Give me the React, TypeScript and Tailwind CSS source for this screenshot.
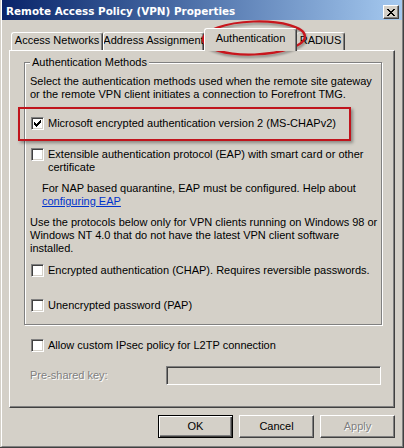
import React from "react";

function CheckMark() {
  return (
    <svg width="7" height="7" viewBox="0 0 7 7" shapeRendering="crispEdges" className="block">
      <path
        d="M0 2h1v3H0zM1 3h1v3H1zM2 4h1v3H2zM3 3h1v3H3zM4 2h1v3H4zM5 1h1v3H5zM6 0h1v3H6z"
        fill="#000"
      />
    </svg>
  );
}

function Box({ checked }: { checked?: boolean }) {
  return (
    <div className="flex h-[13px] w-[13px] shrink-0 items-center justify-center border border-[#808080] border-r-white border-b-white bg-white shadow-[inset_1px_1px_0_#404040,inset_-1px_-1px_0_#d4d0c8]">
      {checked ? <CheckMark /> : null}
    </div>
  );
}

function CloseX() {
  return (
    <svg width="8" height="7" viewBox="0 0 8 7" shapeRendering="crispEdges" className="block">
      <path
        d="M0 0h2v1H0zM6 0h2v1H6zM1 1h2v1H1zM5 1h2v1H5zM2 2h4v1H2zM3 3h2v1H3zM2 4h4v1H2zM1 5h2v1H1zM5 5h2v1H5zM0 6h2v1H0zM6 6h2v1H6z"
        fill="#000"
      />
    </svg>
  );
}

export default function App() {
  return (
    <div className="relative h-[448px] w-[404px] overflow-hidden bg-[#d4d0c8] font-['Liberation_Sans',Arial,sans-serif] text-[11px] leading-[13px] text-black">
      <div className="flex h-full flex-col border-r border-b border-r-[#404040] border-b-[#404040] pl-px">
        <div className="flex h-full flex-col border-l border-r border-b border-l-white border-r-[#808080] border-b-[#808080]">
          {/* Title bar */}
          <div className="flex h-[20px] shrink-0 items-start justify-between bg-linear-to-r from-[#0a246a] to-[#a6caf0]">
            <div className="ml-[4px] mt-[5px] whitespace-nowrap font-['DejaVu_Sans',Verdana,sans-serif] text-[10.4px] font-bold text-white">
              Remote Access Policy (VPN) Properties
            </div>
            <div className="mr-[3px] mt-[5px] flex h-[14px] w-[16px] items-center justify-center border border-white border-r-[#404040] border-b-[#404040] bg-[#d4d0c8] shadow-[inset_-1px_-1px_0_#808080]">
              <CloseX />
            </div>
          </div>

          {/* Body */}
          <div className="flex flex-1 flex-col px-[7px] pt-[8px]">
            {/* Tabs */}
            <div className="flex h-[22px] items-end pl-[2px]">
              <div className="flex h-[18px] w-[92px] justify-center whitespace-nowrap rounded-t-[3px] border-l border-t border-r border-l-white border-t-white border-r-[#404040] pt-[1px] shadow-[inset_-1px_0_0_#808080]">
                Access Networks
              </div>
              <div className="flex h-[18px] w-[101px] justify-center overflow-hidden whitespace-nowrap rounded-t-[3px] border-l border-t border-r border-l-white border-t-white border-r-[#404040] pt-[1px] shadow-[inset_-1px_0_0_#808080]">
                Address Assignment
              </div>
              <div className="relative z-10 -mb-px flex h-[23px] w-[93px] justify-center whitespace-nowrap rounded-t-[3px] border-l border-t border-r border-l-white border-t-white border-r-[#404040] bg-[#d4d0c8] pt-[3px] shadow-[inset_-1px_0_0_#808080]">
                Authentication
              </div>
              <div className="flex h-[18px] w-[48px] justify-center whitespace-nowrap rounded-t-[3px] border-t border-r border-t-white border-r-[#404040] pt-[1px] shadow-[inset_-1px_0_0_#808080]">
                RADIUS
              </div>
            </div>

            {/* Panel */}
            <div className="flex h-[358px] shrink-0 flex-col border border-white border-r-[#404040] border-b-[#404040] pl-[14px] shadow-[inset_-1px_-1px_0_#808080]">
              {/* Group box */}
              <div className="relative mt-[11px] h-[263px] w-[358px] shrink-0 border border-[#808080] shadow-[inset_1px_1px_0_#fff,1px_1px_0_#fff]">
                <div className="absolute left-[5px] top-[-7px] whitespace-nowrap bg-[#d4d0c8] px-[2px]">
                  Authentication Methods
                </div>
                <div className="flex flex-col pl-[5px] pt-[12px]">
                  <p>
                    Select the authentication methods used when the remote site gateway
                    <br />
                    or the remote VPN client initiates a connection to Forefront TMG.
                  </p>
                  <div className="mt-[16px] ml-[1px] flex items-start gap-[4px]">
                    <Box checked />
                    <span className="whitespace-nowrap">
                      Microsoft encrypted authentication version 2 (MS-CHAPv2)
                    </span>
                  </div>
                  <div className="mt-[18px] ml-[1px] flex items-start gap-[4px]">
                    <Box />
                    <span>
                      Extensible authentication protocol (EAP) with smart card or other
                      <br />
                      certificate
                    </span>
                  </div>
                  <p className="mt-[8px] pl-[12px]">
                    For NAP based quarantine, EAP must be configured. Help about
                    <br />
                    <span className="text-[#0033cc] underline">configuring EAP</span>
                  </p>
                  <p className="mt-[8px]">
                    Use the protocols below only for VPN clients running on Windows 98 or
                    <br />
                    Windows NT 4.0 that do not have the latest VPN client software
                    <br />
                    installed.
                  </p>
                  <div className="mt-[9px] ml-[1px] flex items-start gap-[4px]">
                    <Box />
                    <span className="whitespace-nowrap">
                      Encrypted authentication (CHAP). Requires reversible passwords.
                    </span>
                  </div>
                  <div className="mt-[22px] ml-[1px] flex items-start gap-[4px]">
                    <Box />
                    <span className="whitespace-nowrap">Unencrypted password (PAP)</span>
                  </div>
                </div>
              </div>

              <div className="mt-[14px] ml-[7px] flex items-start gap-[4px]">
                <Box />
                <span className="whitespace-nowrap">
                  Allow custom IPsec policy for L2TP connection
                </span>
              </div>

              <div className="mt-[14px] ml-[6px] flex items-center">
                <span className="w-[136px] whitespace-nowrap text-[#808080] [text-shadow:1px_1px_0_#fff]">
                  Pre-shared key:
                </span>
                <div className="h-[19px] w-[215px] border border-[#808080] border-r-white border-b-white bg-[#d4d0c8] shadow-[inset_1px_1px_0_#404040,inset_-1px_-1px_0_#d4d0c8]" />
              </div>
            </div>

            {/* Buttons */}
            <div className="mt-[7px] flex justify-end gap-[6px]">
              <div className="flex h-[23px] w-[75px] items-center justify-center border border-black shadow-[inset_1px_1px_0_#fff,inset_-1px_-1px_0_#404040,inset_-2px_-2px_0_#808080]">
                OK
              </div>
              <div className="flex h-[23px] w-[75px] items-center justify-center border border-white border-r-[#404040] border-b-[#404040] shadow-[inset_-1px_-1px_0_#808080]">
                Cancel
              </div>
              <div className="flex h-[23px] w-[75px] items-center justify-center border border-white border-r-[#404040] border-b-[#404040] text-[#808080] shadow-[inset_-1px_-1px_0_#808080] [text-shadow:1px_1px_0_#fff]">
                Apply
              </div>
            </div>
          </div>
        </div>
      </div>

      {/* Annotation overlays */}
      <svg
        className="pointer-events-none absolute left-[198px] top-[17px] drop-shadow-[1px_2px_1px_rgba(0,0,0,0.35)]"
        width="114"
        height="44"
        viewBox="0 0 114 44"
      >
        <ellipse
          cx="56"
          cy="21"
          rx="51"
          ry="16.5"
          transform="rotate(-2 56 21)"
          fill="none"
          stroke="#c8161d"
          strokeWidth="2.2"
        />
      </svg>
      <div className="pointer-events-none absolute left-[18px] top-[107px] h-[34px] w-[333px] border-2 border-[#c0141c] shadow-[2px_2px_3px_rgba(0,0,0,0.35)]" />
    </div>
  );
}
